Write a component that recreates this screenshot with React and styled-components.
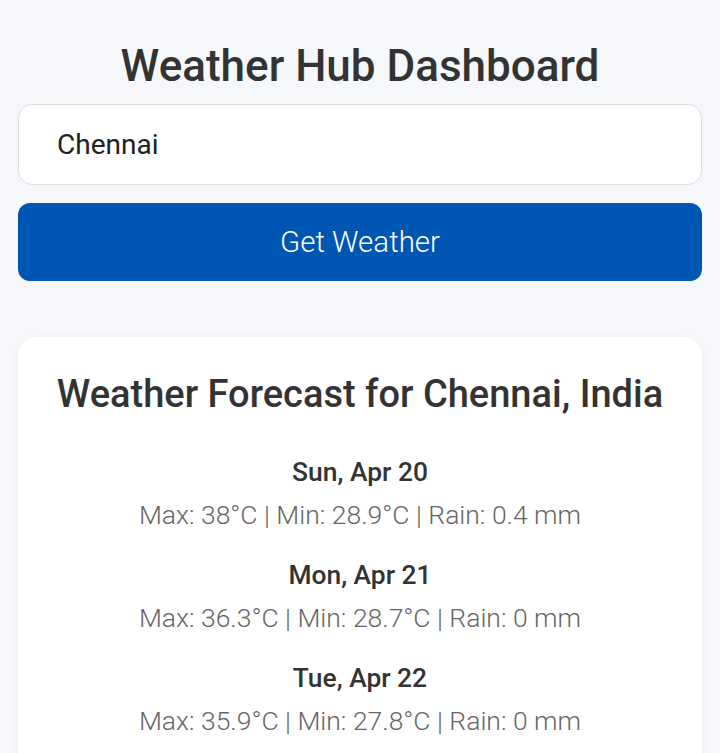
import React from 'react';
import styled, { createGlobalStyle } from 'styled-components';

const GlobalStyle = createGlobalStyle`
  html, body {
    margin: 0;
    padding: 0;
    background: #f5f7fb;
    font-family: Roboto, "Noto Sans", sans-serif;
  }
`;

const Page = styled.div`
  padding: 40px 18px 0;
  display: flex;
  flex-direction: column;
`;

const Title = styled.h1`
  margin: 0 0 12px;
  text-align: center;
  font-size: 44px;
  font-weight: 500;
  color: #333;
  line-height: 52px;
`;

const CityInput = styled.input`
  box-sizing: border-box;
  height: 81px;
  padding: 0 38px;
  border: 1.5px solid #dedede;
  border-radius: 14px;
  background: #fff;
  font-family: inherit;
  font-size: 28px;
  color: #222;
  outline: none;
`;

const Button = styled.button`
  margin-top: 18px;
  height: 78px;
  border: none;
  border-radius: 12px;
  background: #0056b3;
  color: #fff;
  font-family: inherit;
  font-size: 29.5px;
  font-weight: 300;
  cursor: pointer;
`;

const Card = styled.section`
  margin-top: 56px;
  background: #fff;
  border-radius: 18px;
  box-shadow: 0 2px 10px rgba(0, 0, 0, 0.05);
  padding: 34px 20px 40px;
  text-align: center;
`;

const CardTitle = styled.h2`
  margin: 0 0 38px;
  font-size: 38px;
  font-weight: 500;
  color: #333;
  line-height: 46px;
`;

const Day = styled.div`
  margin-bottom: 26px;
`;

const DayName = styled.div`
  font-size: 26.4px;
  font-weight: 500;
  color: #333;
  line-height: 34px;
`;

const DayStats = styled.div`
  margin-top: 9px;
  font-size: 26.5px;
  font-weight: 300;
  color: #666;
  line-height: 34px;
`;

const forecast = [
  { day: 'Sun, Apr 20', max: '38', min: '28.9', rain: '0.4' },
  { day: 'Mon, Apr 21', max: '36.3', min: '28.7', rain: '0' },
  { day: 'Tue, Apr 22', max: '35.9', min: '27.8', rain: '0' },
];

export default function App() {
  return (
    <>
      <GlobalStyle />
      <Page>
        <Title>Weather Hub Dashboard</Title>
        <CityInput defaultValue="Chennai" />
        <Button>Get Weather</Button>
        <Card>
          <CardTitle>Weather Forecast for Chennai, India</CardTitle>
          {forecast.map((f) => (
            <Day key={f.day}>
              <DayName>{f.day}</DayName>
              <DayStats>
                Max: {f.max}°C | Min: {f.min}°C | Rain: {f.rain} mm
              </DayStats>
            </Day>
          ))}
        </Card>
      </Page>
    </>
  );
}
